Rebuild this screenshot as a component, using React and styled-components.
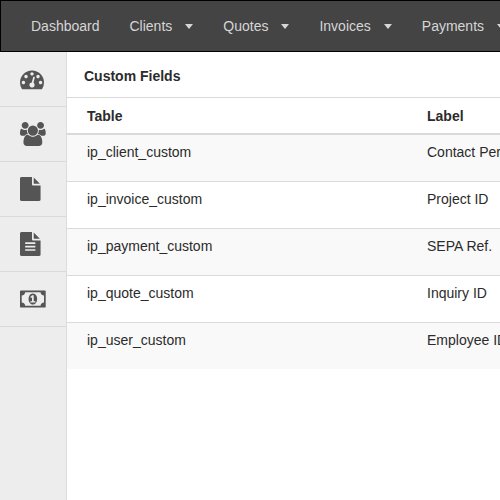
import React from "react";
import styled, { createGlobalStyle } from "styled-components";

const GlobalStyle = createGlobalStyle`
  *, *::before, *::after { box-sizing: border-box; }
  body {
    margin: 0;
    background: #fff;
    color: #2b2b2b;
    font-family: "Liberation Sans", Arial, sans-serif;
    font-size: 14px;
    line-height: 20px;
  }
`;

const Page = styled.div`
  display: flex;
  flex-direction: column;
  min-height: 100vh;
  overflow: hidden;
`;

const Navbar = styled.nav`
  display: flex;
  padding: 0 15px;
  background: #444;
  border: 1px solid #000;
  border-right: 0;
  overflow: hidden;
`;

const NavLink = styled.a`
  display: flex;
  flex: none;
  align-items: center;
  gap: 13px;
  padding: 15px;
  color: #d6d6d6;
  text-decoration: none;
`;

const Caret = styled.span`
  border: 4px solid transparent;
  border-top-width: 5px;
  border-top-color: currentColor;
  border-bottom: 0;
`;

const Body = styled.div`
  display: flex;
  flex: 1;
`;

const Sidebar = styled.aside`
  flex: none;
  width: 67px;
  background: #ededed;
  border-right: 1px solid #dcdcdc;
`;

const SideLink = styled.a`
  display: flex;
  padding: 15px 20px;
  color: #555;
  border-bottom: 1px solid #dadada;
`;

const Icon = styled.svg`
  display: block;
  flex: none;
  height: 24px;
  fill: currentColor;
`;

const Main = styled.main`
  flex: 1;
  min-width: 0;
  overflow: hidden;
`;

const Title = styled.h1`
  margin: 0;
  padding: 14px 17px 11px;
  font-size: 14px;
  line-height: 20px;
  font-weight: bold;
  border-bottom: 1px solid #dadada;
`;

const Table = styled.table`
  width: 100%;
  min-width: 680px;
  table-layout: fixed;
  border-spacing: 0;
`;

const HeadCell = styled.th`
  padding: 8px 20px 7px;
  text-align: left;
  border-bottom: 2px solid #dadada;
`;

const Cell = styled.td`
  height: 47px;
  padding: 7px 20px;
  vertical-align: top;
  border-top: 1px solid #dadada;
`;

const Row = styled.tr`
  &:nth-child(odd) { background: #f9f9f9; }
  &:first-child ${Cell} {
    height: 46px;
    border-top: 0;
  }
`;

const menu = [
  { label: "Dashboard", dropdown: false },
  { label: "Clients", dropdown: true },
  { label: "Quotes", dropdown: true },
  { label: "Invoices", dropdown: true },
  { label: "Payments", dropdown: true },
];

const shortcuts = [
  {
    label: "Dashboard",
    box: "0 0 1792 1792",
    path: "M384 1152q0-53-37.5-90.5t-90.5-37.5-90.5 37.5-37.5 90.5 37.5 90.5 90.5 37.5 90.5-37.5 37.5-90.5zm192-448q0-53-37.5-90.5t-90.5-37.5-90.5 37.5-37.5 90.5 37.5 90.5 90.5 37.5 90.5-37.5 37.5-90.5zm428 481l101-382q6-26-7.5-48.5t-38.5-29.5-48 6.5-30 39.5l-101 382q-60 5-107 43.5t-63 98.5q-20 77 20 146t117 89 146-20 89-117q16-60-6-117t-72-91zm660-33q0-53-37.5-90.5t-90.5-37.5-90.5 37.5-37.5 90.5 37.5 90.5 90.5 37.5 90.5-37.5 37.5-90.5zm-640-640q0-53-37.5-90.5t-90.5-37.5-90.5 37.5-37.5 90.5 37.5 90.5 90.5 37.5 90.5-37.5 37.5-90.5zm448 192q0-53-37.5-90.5t-90.5-37.5-90.5 37.5-37.5 90.5 37.5 90.5 90.5 37.5 90.5-37.5 37.5-90.5zm320 448q0 261-141 483-19 29-54 29h-1402q-35 0-54-29-141-221-141-483 0-182 71-348t191-286 286-191 348-71 348 71 286 191 191 286 71 348z",
  },
  {
    label: "Clients",
    box: "-64 0 1920 1792",
    path: "M529 896q-162 5-265 128h-134q-82 0-138-40.5t-56-118.5q0-353 124-353 6 0 43.5 21t97.5 42.5 119 21.5q67 0 133-23-5 37-5 66 0 139 81 256zm1071 637q0 120-73 189.5t-194 69.5h-874q-121 0-194-69.5t-73-189.5q0-53 3.5-103.5t14-109 26.5-108.5 43-97.5 62-81 85.5-53.5 111.5-20q10 0 43 21.5t73 48 107 48 135 21.5 135-21.5 107-48 73-48 43-21.5q61 0 111.5 20t85.5 53.5 62 81 43 97.5 26.5 108.5 14 109 3.5 103.5zm-1024-1277q0 106-75 181t-181 75-181-75-75-181 75-181 181-75 181 75 75 181zm704 384q0 159-112.5 271.5t-271.5 112.5-271.5-112.5-112.5-271.5 112.5-271.5 271.5-112.5 271.5 112.5 112.5 271.5zm576 225q0 78-56 118.5t-138 40.5h-134q-103-123-265-128 81-117 81-256 0-29-5-66 66 23 133 23 59 0 119-21.5t97.5-42.5 43.5-21q124 0 124 353zm-128-609q0 106-75 181t-181 75-181-75-75-181 75-181 181-75 181 75 75 181z",
  },
  {
    label: "Quotes",
    box: "128 0 1536 1792",
    path: "M1152 512v-472q22 14 36 28l408 408q14 14 28 36h-472zm-128 32q0 40 28 68t68 28h544v1056q0 40-28 68t-68 28h-1344q-40 0-68-28t-28-68v-1600q0-40 28-68t68-28h800v544z",
  },
  {
    label: "Invoices",
    box: "128 0 1536 1792",
    path: "M1596 476q14 14 28 36h-472v-472q22 14 36 28zm-476 164h544v1056q0 40-28 68t-68 28h-1344q-40 0-68-28t-28-68v-1600q0-40 28-68t68-28h800v544q0 40 28 68t68 28zm160 736v-64q0-14-9-23t-23-9h-704q-14 0-23 9t-9 23v64q0 14 9 23t23 9h704q14 0 23-9t9-23zm0-256v-64q0-14-9-23t-23-9h-704q-14 0-23 9t-9 23v64q0 14 9 23t23 9h704q14 0 23-9t9-23zm0-256v-64q0-14-9-23t-23-9h-704q-14 0-23 9t-9 23v64q0 14 9 23t23 9h704q14 0 23-9t9-23z",
  },
  {
    label: "Payments",
    box: "-64 0 1920 1792",
    path: "M704 1152h384v-96h-128v-448h-114l-148 137 77 80q42-37 55-57h2v288h-128v96zm512-256q0 70-21 142t-59.5 134-101.5 101-138 39-138-39-101.5-101-59.5-134-21-142 21-142 59.5-134 101.5-101 138-39 138 39 101.5 101 59.5 134 21 142zm512 256v-512q-106 0-181-75t-75-181h-1152q0 106-75 181t-181 75v512q106 0 181 75t75 181h1152q0-106 75-181t181-75zm128-832v1152q0 26-19 45t-45 19h-1792q-26 0-45-19t-19-45v-1152q0-26 19-45t45-19h1792q26 0 45 19t19 45z",
  },
];

const fields = [
  ["ip_client_custom", "Contact Person"],
  ["ip_invoice_custom", "Project ID"],
  ["ip_payment_custom", "SEPA Ref."],
  ["ip_quote_custom", "Inquiry ID"],
  ["ip_user_custom", "Employee ID"],
];

export default function App() {
  return (
    <Page>
      <GlobalStyle />
      <Navbar>
        {menu.map(({ label, dropdown }) => (
          <NavLink key={label} href="#">
            {label}
            {dropdown && <Caret />}
          </NavLink>
        ))}
      </Navbar>
      <Body>
        <Sidebar>
          {shortcuts.map(({ label, box, path }) => (
            <SideLink key={label} href="#" aria-label={label}>
              <Icon viewBox={box} aria-hidden="true">
                <path d={path} />
              </Icon>
            </SideLink>
          ))}
        </Sidebar>
        <Main>
          <Title>Custom Fields</Title>
          <Table>
            <thead>
              <tr>
                <HeadCell scope="col">Table</HeadCell>
                <HeadCell scope="col">Label</HeadCell>
              </tr>
            </thead>
            <tbody>
              {fields.map(([table, label]) => (
                <Row key={table}>
                  <Cell>{table}</Cell>
                  <Cell>{label}</Cell>
                </Row>
              ))}
            </tbody>
          </Table>
        </Main>
      </Body>
    </Page>
  );
}
